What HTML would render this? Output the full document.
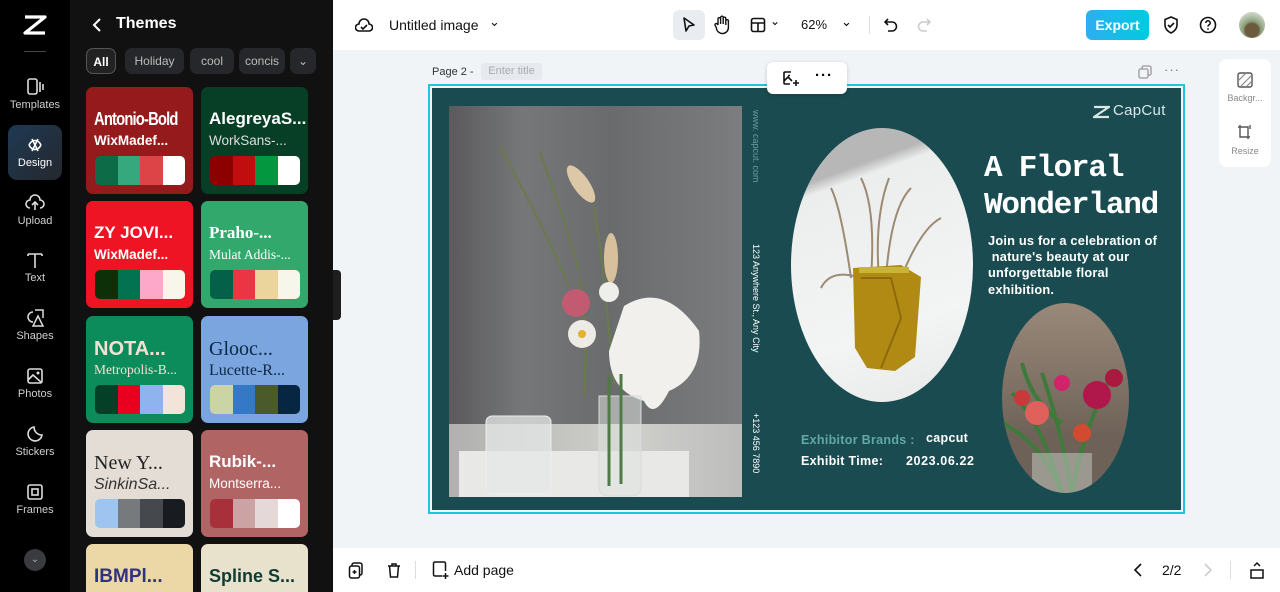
<!DOCTYPE html>
<html><head><meta charset="utf-8">
<style>
*{box-sizing:border-box;margin:0;padding:0}
html,body{width:1280px;height:592px;overflow:hidden}
body{font-family:"Liberation Sans",sans-serif;background:#f1f4f7;position:relative}
.abs{position:absolute}
#rail{left:0;top:0;width:70px;height:592px;background:#000}
.ri{position:absolute;left:0;width:70px;text-align:center;color:#cfcfcf;font-size:11px}
.ri svg{display:block;margin:0 auto 3px}
#panel{left:70px;top:0;width:263px;height:592px;background:#111112;overflow:hidden}
.chip{position:absolute;top:48px;height:26px;border-radius:7px;background:#26272a;color:#bbb;font-size:12px;line-height:26px;text-align:center;overflow:hidden}
.card{position:absolute;width:107px;height:107px;border-radius:7px;overflow:hidden}
.card .t1{position:absolute;left:8px;top:22px;font-size:17px;font-weight:bold;white-space:nowrap}
.card .t2{position:absolute;left:8px;top:46px;font-size:13.5px;white-space:nowrap}
.pal{position:absolute;left:9px;top:69px;width:90px;height:29px;border-radius:5px;overflow:hidden;display:flex}
.pal i{flex:1}
#top{left:333px;top:0;width:947px;height:50px;background:#fff}
#bot{left:333px;top:548px;width:947px;height:44px;background:#fff}
.ic{position:absolute}
.dj{font-family:"Liberation Sans",sans-serif;font-weight:bold;white-space:nowrap}
</style></head><body>

<div id="rail" class="abs">
  <svg class="abs" style="left:23px;top:14px" width="24" height="22" viewBox="0 0 24 22"><path d="M2 3h20L12 11 2 19h20" fill="none" stroke="#fff" stroke-width="3.2" stroke-linejoin="round"/></svg>
  <div class="abs" style="left:24px;top:51px;width:22px;height:1px;background:#444"></div>
  <div class="ri" style="top:78px"><svg width="20" height="18" viewBox="0 0 20 18"><rect x="3" y="1" width="9" height="15" rx="2" fill="none" stroke="#ddd" stroke-width="1.6"/><path d="M15 4v10M18 6v6" stroke="#ddd" stroke-width="1.6"/></svg>Templates</div>
  <div class="abs" style="left:8px;top:125px;width:54px;height:55px;border-radius:9px;background:linear-gradient(135deg,#1e3a55,#25272c)"></div>
  <div class="ri" style="top:136px;color:#fff"><svg width="18" height="18" viewBox="0 0 18 18"><path d="M3 9c3-6 9-6 12 0M3 9c3 6 9 6 12 0M6 3l6 12M12 3L6 15" fill="none" stroke="#fff" stroke-width="1.6"/></svg>Design</div>
  <div class="ri" style="top:194px"><svg width="20" height="18" viewBox="0 0 20 18"><path d="M5 14a4 4 0 0 1 0-8 5 5 0 0 1 10 0 4 4 0 0 1 0 8M10 8v8M7 11l3-3 3 3" fill="none" stroke="#ddd" stroke-width="1.6"/></svg>Upload</div>
  <div class="ri" style="top:251px"><svg width="18" height="18" viewBox="0 0 18 18"><path d="M2 3h14M9 3v14M2 3v2M16 3v2" fill="none" stroke="#ddd" stroke-width="1.6"/></svg>Text</div>
  <div class="ri" style="top:309px"><svg width="20" height="18" viewBox="0 0 20 18"><path d="M8 3a5 5 0 1 0 0 10M10 1h8v8M13 7l-5 10h10z" fill="none" stroke="#ddd" stroke-width="1.5"/></svg>Shapes</div>
  <div class="ri" style="top:367px"><svg width="18" height="18" viewBox="0 0 18 18"><rect x="2" y="2" width="14" height="14" rx="2" fill="none" stroke="#ddd" stroke-width="1.6"/><path d="M2 13l5-5 9 8" fill="none" stroke="#ddd" stroke-width="1.6"/><circle cx="12" cy="6" r="1.5" fill="#ddd"/></svg>Photos</div>
  <div class="ri" style="top:425px"><svg width="18" height="18" viewBox="0 0 18 18"><path d="M16 10A7 7 0 1 1 8 2c0 4 3 8 8 8z" fill="none" stroke="#ddd" stroke-width="1.6"/></svg>Stickers</div>
  <div class="ri" style="top:483px"><svg width="18" height="18" viewBox="0 0 18 18"><rect x="2" y="2" width="14" height="14" rx="2" fill="none" stroke="#ddd" stroke-width="1.6"/><rect x="6" y="6" width="6" height="6" fill="none" stroke="#ddd" stroke-width="1.6"/></svg>Frames</div>
  <div class="abs" style="left:24px;top:549px;width:22px;height:22px;border-radius:50%;background:#3a3b3e;color:#aaa;font-size:10px;text-align:center;line-height:22px">⌄</div>
</div>

<div id="panel" class="abs">
  <svg class="abs" style="left:22px;top:18px" width="10" height="14" viewBox="0 0 10 14"><path d="M8 1L2 7l6 6" fill="none" stroke="#fff" stroke-width="2"/></svg>
  <div class="abs" style="left:46px;top:15px;color:#fff;font-size:16px;font-weight:bold">Themes</div>
  <div class="chip" style="left:16px;width:30px;color:#fff;font-weight:bold;border:1px solid #555;background:#222">All</div>
  <div class="chip" style="left:55px;width:59px">Holiday</div>
  <div class="chip" style="left:120px;width:44px">cool</div>
  <div class="chip" style="left:169px;width:46px">concis</div>
  <div class="chip" style="left:220px;width:26px">⌄</div>

  <div class="card" style="left:16px;top:87px;background:#941a1c"><div class="t1" style="color:#fff;font-size:18px;letter-spacing:-1px;transform:scaleX(.82);transform-origin:left">Antonio-Bold</div><div class="t2" style="color:#fff;font-weight:bold">WixMadef...</div><div class="pal"><i style="background:#0d6b48"></i><i style="background:#36a87e"></i><i style="background:#dd4447"></i><i style="background:#fff"></i></div></div>
  <div class="card" style="left:131px;top:87px;background:#073f26"><div class="t1" style="color:#fff">AlegreyaS...</div><div class="t2" style="color:#ddd">WorkSans-...</div><div class="pal"><i style="background:#8c0000"></i><i style="background:#c00e0e"></i><i style="background:#03983f"></i><i style="background:#fff"></i></div></div>
  <div class="card" style="left:16px;top:201px;background:#ee1424"><div class="t1" style="color:#fff">ZY JOVI...</div><div class="t2" style="color:#fff;font-weight:bold">WixMadef...</div><div class="pal"><i style="background:#0e3009"></i><i style="background:#037250"></i><i style="background:#fda8c9"></i><i style="background:#f8f5ea"></i></div></div>
  <div class="card" style="left:131px;top:201px;background:#33a86c"><div class="t1" style="color:#fff;font-family:'Liberation Serif',serif">Praho-...</div><div class="t2" style="color:#fff;font-family:'Liberation Serif',serif">Mulat Addis-...</div><div class="pal"><i style="background:#05604a"></i><i style="background:#ec3544"></i><i style="background:#ecd59c"></i><i style="background:#f6f7ea"></i></div></div>
  <div class="card" style="left:16px;top:316px;background:#0c8b5b"><div class="t1" style="color:#f4e1d6;font-size:20px">NOTA...</div><div class="t2" style="color:#f4e1d6;font-family:'Liberation Serif',serif">Metropolis-B...</div><div class="pal"><i style="background:#043f28"></i><i style="background:#e9001f"></i><i style="background:#8fb3ee"></i><i style="background:#f3e4da"></i></div></div>
  <div class="card" style="left:131px;top:316px;background:#7aa5df"><div class="t1" style="color:#0c2844;font-family:'Liberation Serif',serif;font-size:20px;font-weight:normal">Glooc...</div><div class="t2" style="color:#0c2844;font-family:'Liberation Serif',serif;font-size:16px">Lucette-R...</div><div class="pal"><i style="background:#cbd4a5"></i><i style="background:#3579c6"></i><i style="background:#4b5a2b"></i><i style="background:#062641"></i></div></div>
  <div class="card" style="left:16px;top:430px;background:#e4ddd6"><div class="t1" style="color:#222;font-family:'Liberation Serif',serif;font-weight:normal;font-size:20px">New Y...</div><div class="t2" style="color:#333;font-style:italic;font-size:16px">SinkinSa...</div><div class="pal"><i style="background:#9ec5ef"></i><i style="background:#767a7d"></i><i style="background:#45484d"></i><i style="background:#181b1f"></i></div></div>
  <div class="card" style="left:131px;top:430px;background:#b06463"><div class="t1" style="color:#fff">Rubik-...</div><div class="t2" style="color:#fff">Montserra...</div><div class="pal"><i style="background:#a8303a"></i><i style="background:#cba3a4"></i><i style="background:#e4d8d8"></i><i style="background:#fff"></i></div></div>
  <div class="card" style="left:16px;top:544px;height:48px;border-radius:7px 7px 0 0;background:#ecd8a6"><div class="t1" style="color:#2f3480;font-size:19px">IBMPl...</div></div>
  <div class="card" style="left:131px;top:544px;height:48px;border-radius:7px 7px 0 0;background:#e8e1cc"><div class="t1" style="color:#0e3b35;font-size:18px;top:22px">Spline S...</div></div>
</div>
<div class="abs" style="left:333px;top:270px;width:8px;height:50px;background:#1d1e20;border-radius:0 4px 4px 0"></div>

<div id="top" class="abs">
  <svg class="ic" style="left:22px;top:17px" width="18" height="16" viewBox="0 0 18 16"><path d="M4 14a3.5 3.5 0 0 1 0-7 5 5 0 0 1 10 0 3.5 3.5 0 0 1 0 7z M6 10l2 2 4-4" fill="none" stroke="#111" stroke-width="1.6"/></svg>
  <div class="abs" style="left:56px;top:17px;font-size:14px;color:#111">Untitled image</div>
  <div class="abs" style="left:156px;top:14px;font-size:13px;color:#111">⌄</div>
  <div class="abs" style="left:340px;top:10px;width:32px;height:30px;border-radius:6px;background:#e9edf1"></div>
  <svg class="ic" style="left:349px;top:16px" width="14" height="18" viewBox="0 0 14 18"><path d="M2 2l10 7-5 1-3 5z" fill="none" stroke="#111" stroke-width="1.6" stroke-linejoin="round"/></svg>
  <svg class="ic" style="left:380px;top:15px" width="18" height="20" viewBox="0 0 18 20"><path d="M5 10V4a1.3 1.3 0 0 1 2.6 0v5M7.6 8V2.5a1.3 1.3 0 0 1 2.6 0V9M10.2 8V3.5a1.3 1.3 0 0 1 2.6 0V10M12.8 9V6a1.3 1.3 0 0 1 2.6 0v6a6 6 0 0 1-12 1L2 10a1.3 1.3 0 0 1 2.3-1L5 10" fill="none" stroke="#111" stroke-width="1.4"/></svg>
  <svg class="ic" style="left:417px;top:17px" width="16" height="16" viewBox="0 0 16 16"><rect x="1.5" y="1.5" width="13" height="13" rx="2" fill="none" stroke="#111" stroke-width="1.6"/><path d="M1.5 6h13M8 6v8.5" stroke="#111" stroke-width="1.6"/></svg>
  <div class="abs" style="left:437px;top:14px;font-size:12px">⌄</div>
  <div class="abs" style="left:468px;top:17px;font-size:13px;color:#111">62%</div>
  <div class="abs" style="left:508px;top:14px;font-size:13px">⌄</div>
  <div class="abs" style="left:536px;top:16px;width:1px;height:18px;background:#ddd"></div>
  <svg class="ic" style="left:551px;top:17px" width="14" height="16" viewBox="0 0 14 16"><path d="M4 2L1 5l3 3M1 5h7a4.5 4.5 0 0 1 0 9H4" fill="none" stroke="#111" stroke-width="1.6"/></svg>
  <svg class="ic" style="left:584px;top:17px" width="14" height="16" viewBox="0 0 14 16"><path d="M10 2l3 3-3 3M13 5H6a4.5 4.5 0 0 0 0 9h4" fill="none" stroke="#ccc" stroke-width="1.6"/></svg>
  <div class="abs" style="left:753px;top:10px;width:63px;height:30px;border-radius:6px;background:linear-gradient(90deg,#2eaef0,#00cbe0);color:#fff;font-weight:bold;font-size:14px;text-align:center;line-height:30px">Export</div>
  <svg class="ic" style="left:829px;top:15px" width="18" height="20" viewBox="0 0 18 20"><path d="M9 2l6 2.5V10c0 4-3 6.5-6 8-3-1.5-6-4-6-8V4.5z M6 10l2 2 4-4" fill="none" stroke="#111" stroke-width="1.6"/></svg>
  <svg class="ic" style="left:866px;top:16px" width="18" height="18" viewBox="0 0 18 18"><circle cx="9" cy="9" r="7.5" fill="none" stroke="#111" stroke-width="1.6"/><path d="M6.8 7a2.2 2.2 0 1 1 3 2c-.7.3-.8.8-.8 1.6" fill="none" stroke="#111" stroke-width="1.5"/><circle cx="9" cy="13" r=".9" fill="#111"/></svg>
  <div class="abs" style="left:906px;top:12px;width:26px;height:26px;border-radius:50%;background:radial-gradient(circle at 50% 70%,#6b5a3e 0 30%,#8aa07a 40%,#c9d2c4 75%)"></div>
</div>

<div class="abs" style="left:432px;top:66px;font-size:11px;color:#333">Page 2 -</div>
<div class="abs" style="left:481px;top:63px;width:61px;height:17px;background:#e6e9ed;border-radius:3px;font-size:11px;color:#a8acb1;line-height:17px;text-align:center">Enter title</div>
<div class="abs" style="left:767px;top:62px;width:80px;height:32px;background:#fff;border-radius:6px;box-shadow:0 1px 4px rgba(0,0,0,.18);z-index:3">
  <svg class="ic" style="left:15px;top:8px" width="17" height="17" viewBox="0 0 17 17"><path d="M9 2H3a1 1 0 0 0-1 1v10a1 1 0 0 0 1 1h5M2 11l4-4 4 4M14 10v6M11 13h6" fill="none" stroke="#111" stroke-width="1.6"/><circle cx="7" cy="5.5" r="1" fill="#111"/></svg>
  <div class="abs" style="left:48px;top:5px;font-size:15px;font-weight:bold;letter-spacing:1px">···</div>
</div>
<svg class="ic" style="left:1138px;top:65px" width="14" height="14" viewBox="0 0 14 14"><rect x="4" y="1" width="9" height="9" rx="1.5" fill="none" stroke="#999" stroke-width="1.3"/><rect x="1" y="4" width="9" height="9" rx="1.5" fill="#f1f4f7" stroke="#999" stroke-width="1.3"/></svg>
<div class="abs" style="left:1164px;top:62px;font-size:13px;color:#777;letter-spacing:1px">···</div>

<div class="abs" style="left:1219px;top:59px;width:52px;height:108px;background:#fff;border-radius:8px">
  <svg class="ic" style="left:18px;top:13px" width="16" height="16" viewBox="0 0 16 16"><rect x="1" y="1" width="14" height="14" rx="2" fill="none" stroke="#555" stroke-width="1.4"/><path d="M1 9L9 1M4 14L14 4M9 15l6-6" stroke="#888" stroke-width="1.2"/></svg>
  <div class="abs" style="left:0;width:52px;top:34px;font-size:9px;color:#888;text-align:center">Backgr...</div>
  <svg class="ic" style="left:18px;top:65px" width="16" height="16" viewBox="0 0 16 16"><path d="M3 1v12h10M1 3h10v12M13 1v4" fill="none" stroke="#555" stroke-width="1.4"/></svg>
  <div class="abs" style="left:0;width:52px;top:87px;font-size:9px;color:#888;text-align:center">Resize</div>
</div>

<div class="abs" style="left:428px;top:84px;width:757px;height:430px;border:2px solid #1cc6dc"></div>
<div class="abs" style="left:432px;top:88px;width:749px;height:422px;background:#1a4b50;overflow:hidden">
  <div class="abs" style="left:17px;top:18px;width:293px;height:391px;background:linear-gradient(90deg,#5a5a5c 0%,#767778 25%,#6a6b6d 55%,#7c7d7e 100%);overflow:hidden">
    <div class="abs" style="left:0;top:318px;width:293px;height:73px;background:linear-gradient(90deg,#b0b0ae,#cfcfcc 60%,#bdbdbb)"></div>
    <div class="abs" style="left:10px;top:345px;width:230px;height:46px;background:#e8e8e6"></div>
    <svg class="abs" style="left:0;top:0" width="293" height="391" viewBox="0 0 293 391">
      <path d="M50 40Q90 110 120 180M90 45q20 50 40 120M130 170q10 50 5 120M145 100q10 60 20 180" fill="none" stroke="#6b7a4a" stroke-width="2"/>
      <ellipse cx="132" cy="78" rx="8" ry="22" fill="#dcc7a6" transform="rotate(-35 132 78)"/>
      <ellipse cx="162" cy="152" rx="7" ry="25" fill="#d9c09c"/>
      <circle cx="127" cy="197" r="14" fill="#c25a72"/>
      <circle cx="133" cy="228" r="14" fill="#ecebe6"/><circle cx="133" cy="228" r="4" fill="#e6b22b"/>
      <circle cx="160" cy="186" r="10" fill="#eeeeea"/>
      <path d="M175 200q40-25 75 25q5 45-30 60q-15 30-25 10q-35-10-35-50z" fill="#f1f0ec"/>
      <path d="M150 290h42v90q0 10-10 10h-22q-10 0-10-10z" fill="rgba(220,225,222,.55)" stroke="#d8dcda"/>
      <path d="M160 270v110M172 268v110" stroke="#4d7a45" stroke-width="3"/>
      <rect x="37" y="310" width="65" height="78" rx="6" fill="rgba(230,232,232,.75)" stroke="#eee"/>
    </svg>
  </div>
  <div class="abs" style="left:315px;top:22px;width:14px;writing-mode:vertical-rl;font-size:9px;color:#6a9ca0;white-space:nowrap">www. capcut. com</div>
  <div class="abs" style="left:315px;top:156px;width:14px;writing-mode:vertical-rl;font-size:9px;color:#fff;white-space:nowrap">123 Anywhere St., Any City</div>
  <div class="abs" style="left:315px;top:325px;width:14px;writing-mode:vertical-rl;font-size:9px;color:#fff;white-space:nowrap">+123 456 7890</div>
  <div class="abs" style="left:359px;top:40px;width:182px;height:274px;border-radius:50%;background:linear-gradient(160deg,#b7b7b7 0 18%,#eceded 22%,#f3f4f4 70%,#e7e8e8);overflow:hidden">
    <svg class="abs" style="left:0;top:0" width="182" height="274" viewBox="0 0 182 274">
      <path d="M60 150Q50 80 40 60M80 150Q85 80 70 50M95 150Q100 80 120 60M110 150Q130 100 150 90M70 150q-30-10-40 10M88 150q-5-60 10-100" fill="none" stroke="#9c8a73" stroke-width="2"/>
      <path d="M62 140l48-3 20 12-6 80-20 14-28-3-12-20z" fill="#b18a13"/>
      <path d="M68 142l50 0" stroke="#c9b43a" stroke-width="6"/>
      <path d="M70 150l30 0 10 40-20 50" fill="none" stroke="#8c6a0c" stroke-width="2"/>
    </svg>
  </div>
  <div class="abs" style="left:570px;top:215px;width:127px;height:190px;border-radius:50%;background:linear-gradient(180deg,#9a8979,#6e6258 70%);overflow:hidden">
    <svg class="abs" style="left:0;top:0" width="127" height="190" viewBox="0 0 127 190">
      <path d="M10 90q30 30 50 100M40 70q20 60 30 120M110 70q-30 60-40 120M0 120q40 20 60 70M20 60q10 40 40 60" fill="none" stroke="#3e7a3a" stroke-width="4"/>
      <circle cx="35" cy="110" r="12" fill="#e0605c"/><circle cx="20" cy="95" r="8" fill="#c83a3a"/>
      <circle cx="95" cy="92" r="14" fill="#b0174a"/><circle cx="60" cy="80" r="8" fill="#d1226a"/>
      <circle cx="80" cy="130" r="9" fill="#d44a30"/><circle cx="112" cy="75" r="9" fill="#a81a40"/>
      <rect x="30" y="150" width="60" height="40" fill="rgba(200,205,200,.5)"/>
    </svg>
  </div>
  <svg class="abs" style="left:661px;top:17px" width="17" height="14" viewBox="0 0 17 14"><path d="M1 2h15L8.5 7 1 12h15" fill="none" stroke="#d8e6e6" stroke-width="2.2"/></svg>
  <div class="abs" style="left:681px;top:14px;font-size:15px;color:#d8e6e6;letter-spacing:.3px">CapCut</div>
  <div class="abs" style="left:552px;top:62px;font-size:31px;line-height:37px;color:#fff;font-family:'Liberation Mono',monospace;font-weight:bold;letter-spacing:-1.2px;white-space:nowrap">A Floral<br>Wonderland</div>
  <div class="abs dj" style="left:556px;top:145px;font-size:12.8px;line-height:16.2px;color:#fff;letter-spacing:.2px">Join us for a celebration of<br>&nbsp;nature's beauty at our<br>unforgettable floral<br>exhibition.</div>
  <div class="abs dj" style="left:369px;top:345px;font-size:12.5px;color:#5fa9a9;letter-spacing:.3px">Exhibitor Brands :</div>
  <div class="abs dj" style="left:494px;top:343px;font-size:12.5px;color:#fff;letter-spacing:.3px">capcut</div>
  <div class="abs dj" style="left:369px;top:366px;font-size:12.5px;color:#fff;letter-spacing:.3px">Exhibit Time:</div>
  <div class="abs dj" style="left:474px;top:366px;font-size:12.5px;color:#fff;letter-spacing:.6px">2023.06.22</div>
</div>

<div id="bot" class="abs">
  <svg class="ic" style="left:15px;top:14px" width="16" height="17" viewBox="0 0 16 17"><rect x="4" y="1" width="10" height="12" rx="2" fill="none" stroke="#111" stroke-width="1.5"/><rect x="1.5" y="4" width="10" height="12" rx="2" fill="#fff" stroke="#111" stroke-width="1.5"/><path d="M6.5 8v4M4.5 10h4" stroke="#111" stroke-width="1.4"/></svg>
  <svg class="ic" style="left:53px;top:14px" width="16" height="17" viewBox="0 0 16 17"><path d="M2 4h12M6 4V2h4v2M3.5 4l1 11h7l1-11" fill="none" stroke="#111" stroke-width="1.5"/></svg>
  <div class="abs" style="left:82px;top:13px;width:1px;height:18px;background:#ddd"></div>
  <svg class="ic" style="left:99px;top:13px" width="17" height="18" viewBox="0 0 17 18"><path d="M10 15H3a1.5 1.5 0 0 1-1.5-1.5v-11A1.5 1.5 0 0 1 3 1h9a1.5 1.5 0 0 1 1.5 1.5V10M13.5 12v6M10.5 15h6" fill="none" stroke="#111" stroke-width="1.5"/></svg>
  <div class="abs" style="left:121px;top:14px;font-size:14px;color:#111">Add page</div>
  <svg class="ic" style="left:800px;top:15px" width="10" height="14" viewBox="0 0 10 14"><path d="M8 1L2 7l6 6" fill="none" stroke="#111" stroke-width="1.6"/></svg>
  <div class="abs" style="left:829px;top:14px;font-size:14px;color:#111">2/2</div>
  <svg class="ic" style="left:870px;top:15px" width="10" height="14" viewBox="0 0 10 14"><path d="M2 1l6 6-6 6" fill="none" stroke="#ccc" stroke-width="1.6"/></svg>
  <div class="abs" style="left:897px;top:13px;width:1px;height:18px;background:#ddd"></div>
  <svg class="ic" style="left:916px;top:13px" width="16" height="18" viewBox="0 0 16 18"><path d="M5 5l3-3 3 3M2 9h12v8H2z" fill="none" stroke="#111" stroke-width="1.5"/></svg>
</div>
</body></html>
